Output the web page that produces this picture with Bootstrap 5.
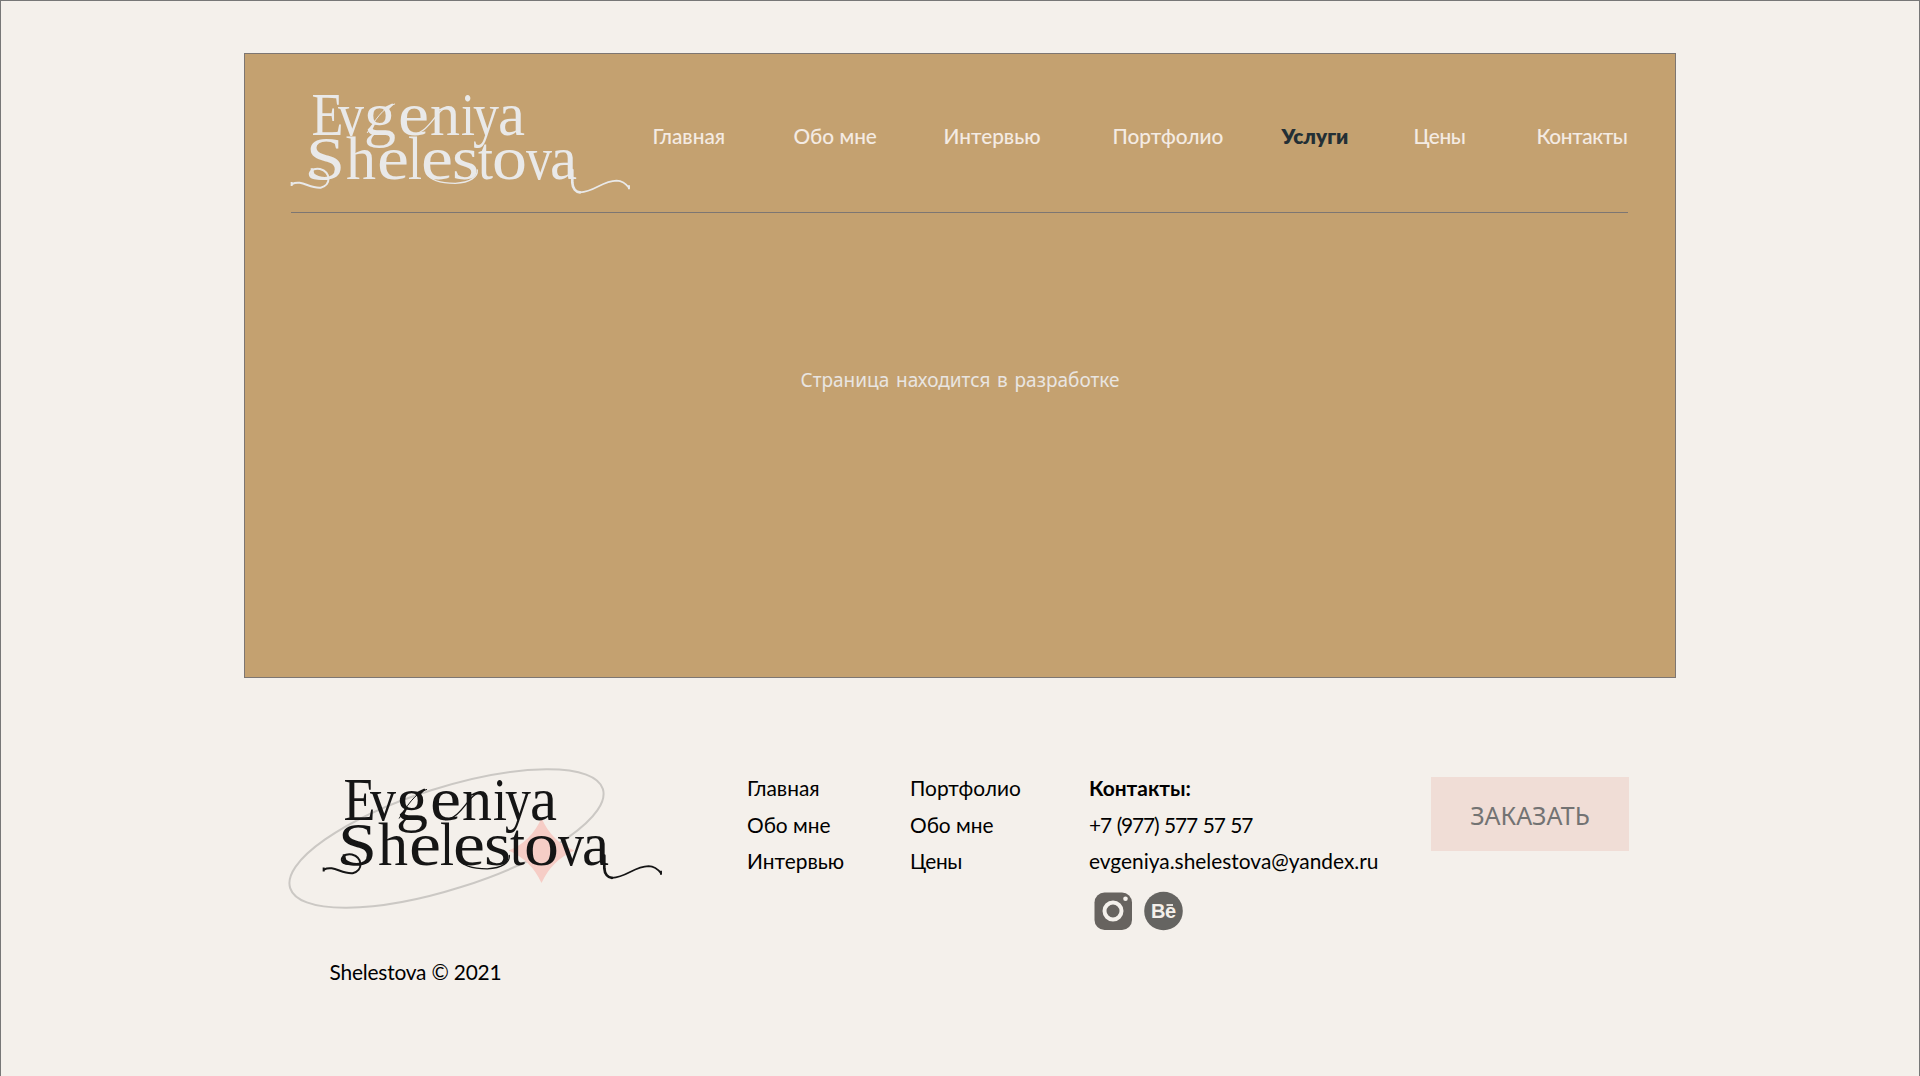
<!DOCTYPE html>
<html lang="ru">
<head>
<meta charset="utf-8">
<meta name="viewport" content="width=device-width, initial-scale=1">
<title>Evgeniya Shelestova</title>
<link rel="stylesheet" href="https://cdn.jsdelivr.net/npm/bootstrap@5.3.0/dist/css/bootstrap.min.css">
<style>
  body { background: #f4f0eb; color: #000; font-family: Lato, sans-serif; font-size: 20.9px; line-height: 30px; }
  a { color: inherit; text-decoration: none; white-space: nowrap; }
  .page-sheet { height: 1076px; border: solid #777; border-width: 1px 1px 0; padding-top: 52px; overflow: hidden; }
  .hero-frame { width: 1432px; height: 625px; margin-left: 243px; padding: 0 47px 0 46px; background: #c4a170; border: 1px solid #7d7672; }
  .site-head { height: 159px; padding-top: 31px; border-bottom: 1px solid #7d7672; color: #f4ebe3; }
  .head-logo { width: 360px; height: 114px; flex: none; color: #e9e9e9; overflow: visible; }
  .head-menu { display: grid; grid-template-columns: 141px 150px 169px 169px 132px 123px 95px; margin: 36px 0 0 1.5px; width: 979px; flex: none; font-size: 20.8px; font-weight: 500; }
  .head-menu .active { color: #232f35; font-weight: 800; }
  .tight { letter-spacing: -.4px; }
  .notice { margin-top: 152px; padding-left: 1px; font: 19px/30px "Noto Sans", sans-serif; word-spacing: 1.8px; color: #e9e5e1; }
  .site-foot { margin-left: 285px; padding-top: 88px; line-height: 36.5px; }
  .foot-brand { width: 461px; height: 146px; }
  .foot-brand svg { display: block; width: 382px; height: 146px; color: #151515; overflow: visible; }
  .foot-links { padding-top: 4px; }
  .phone { letter-spacing: -1.15px; word-spacing: 1.5px; }
  .socials { gap: 11px; padding: 11px 0 0 4.5px; }
  .btn-order { width: 198px; height: 74px; margin-top: 11px; padding: 1px 0 0; border: 0; border-radius: 0; background: #f0ddd6; color: #737373; font: 25px/70px "Noto Sans", sans-serif; }
  .copy { margin: 26.5px 0 0 43.5px; letter-spacing: -.2px; line-height: 30px; }
</style>
<script src="https://cdn.jsdelivr.net/npm/bootstrap@5.3.0/dist/js/bootstrap.bundle.min.js"></script>
</head>
<body>
<div class="page-sheet">
  <section class="hero-frame">
    <header class="site-head d-flex align-items-start">
      <svg class="head-logo" viewBox="0 0 360 114" role="img" aria-label="Evgeniya Shelestova">
        <g id="wordmark" fill="currentColor">
          <g font-family="Liberation Serif, serif" font-size="62">
            <text y="49.5"><tspan x="20.5" textLength="32" lengthAdjust="spacingAndGlyphs">E</tspan><tspan x="47" textLength="26" lengthAdjust="spacingAndGlyphs">v</tspan><tspan x="73" textLength="32" lengthAdjust="spacingAndGlyphs">g</tspan><tspan x="107" textLength="31" lengthAdjust="spacingAndGlyphs">e</tspan><tspan x="139" textLength="30" lengthAdjust="spacingAndGlyphs">n</tspan><tspan x="170" textLength="14" lengthAdjust="spacingAndGlyphs">i</tspan><tspan x="182" textLength="26" lengthAdjust="spacingAndGlyphs">y</tspan><tspan x="207" textLength="27" lengthAdjust="spacingAndGlyphs">a</tspan></text>
            <text y="94"><tspan x="15" textLength="39" lengthAdjust="spacingAndGlyphs">S</tspan><tspan x="55" textLength="30" lengthAdjust="spacingAndGlyphs">h</tspan><tspan x="86" textLength="32" lengthAdjust="spacingAndGlyphs">e</tspan><tspan x="117" textLength="14" lengthAdjust="spacingAndGlyphs">l</tspan><tspan x="130" textLength="32" lengthAdjust="spacingAndGlyphs">e</tspan><tspan x="161" textLength="27" lengthAdjust="spacingAndGlyphs">s</tspan><tspan x="187" textLength="15" lengthAdjust="spacingAndGlyphs">t</tspan><tspan x="201" textLength="35" lengthAdjust="spacingAndGlyphs">o</tspan><tspan x="235" textLength="26" lengthAdjust="spacingAndGlyphs">v</tspan><tspan x="259" textLength="27" lengthAdjust="spacingAndGlyphs">a</tspan></text>
          </g>
          <g transform="translate(-61 -45) scale(.3333)" fill="none" stroke="currentColor" stroke-linecap="round">
            <path stroke-width="6" d="M186 432C215 418 238 446 272 443C305 436 302 396 270 387C247 383 234 398 242 410C250 419 270 418 290 417"/>
            <path stroke-width="3" d="M412 278C430 248 462 198 494 192"/>
            <path stroke-width="4" d="M550 282C600 278 620 204 656 200M590 400C602 425 640 430 676 430C722 428 744 410 742 390"/>
            <path stroke-width="8" d="M1027 390V428C1028 446 1038 457 1050 457"/>
            <path stroke-width="5" d="M1050 457C1094 456 1115 423 1160 422C1180 423 1190 434 1197 443"/>
            <path stroke-width="6" stroke-linecap="butt" d="M185 426V438M1197 436V448"/>
          </g>
        </g>
      </svg>
      <nav class="head-menu">
        <a href="#">Главная</a><a href="#">Обо мне</a><a href="#">Интервью</a><a href="#">Портфолио</a><a href="#" class="active">Услуги</a><a href="#" class="tight">Цены</a><a href="#" class="tight">Контакты</a>
      </nav>
    </header>
    <p class="notice text-center mb-0">Страница находится в разработке</p>
  </section>

  <footer class="site-foot">
    <div class="d-flex align-items-start">
      <div class="foot-brand flex-shrink-0">
        <svg viewBox="0 0 382 146" role="img" aria-label="Evgeniya Shelestova">
          <ellipse cx="160.5" cy="72.5" rx="164" ry="50.7" transform="rotate(-17.6 160.5 72.5)" fill="none" stroke="#cbc8c4" stroke-width="2"/>
          <path fill="#f6cdc6" d="M255.5 52Q266 76 288.5 84.5Q266 94 255.5 117Q245 94 222.5 84.5Q245 76 255.5 52Z"/>
          <use href="#wordmark" x="37" y="4.5"/>
        </svg>
      </div>
      <div class="foot-links d-flex flex-column flex-shrink-0" style="width:163px"><a href="#">Главная</a><a href="#">Обо мне</a><a href="#">Интервью</a></div>
      <div class="foot-links d-flex flex-column flex-shrink-0" style="width:179px"><a href="#">Портфолио</a><a href="#">Обо мне</a><a href="#" class="tight">Цены</a></div>
      <div class="foot-links d-flex flex-column flex-shrink-0" style="width:342px">
        <strong>Контакты:</strong>
        <a href="#" class="phone">+7 (977) 577 57 57</a>
        <a href="#">evgeniya.shelestova@yandex.ru</a>
        <div class="socials d-flex">
          <a href="#" class="d-flex" aria-label="Instagram"><svg width="39" height="40" viewBox="0 0 39 40"><rect x=".5" y="1.5" width="37.5" height="37.5" rx="10" fill="#67635f"/><circle cx="19" cy="20" r="8.5" fill="none" stroke="#f4f0eb" stroke-width="4"/><circle cx="31.5" cy="7.8" r="2.3" fill="#f4f0eb"/></svg></a>
          <a href="#" class="d-flex" aria-label="Behance"><svg width="39" height="40" viewBox="0 0 39 40"><circle cx="19.5" cy="20" r="19.3" fill="#656461"/><text x="7" y="27" font-family="Liberation Sans, sans-serif" font-weight="700" font-size="20" textLength="25" fill="#f4f0eb">Be</text><path d="M22.5 14H29" stroke="#f4f0eb" stroke-width="1.8"/></svg></a>
        </div>
      </div>
      <button type="button" class="btn btn-order flex-shrink-0">ЗАКАЗАТЬ</button>
    </div>
    <p class="copy mb-0">Shelestova © 2021</p>
  </footer>
</div>
</body>
</html>
